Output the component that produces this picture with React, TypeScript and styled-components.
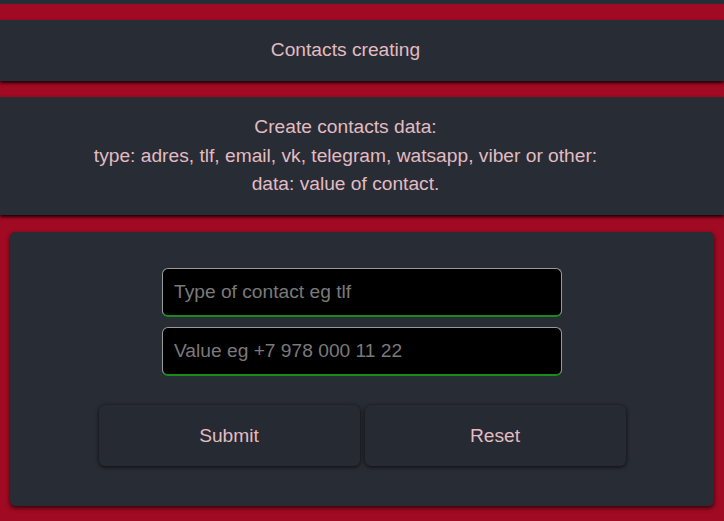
import React from "react";
import styled, { createGlobalStyle } from "styled-components";

const Global = createGlobalStyle`
  html, body { margin: 0; padding: 0; }
  body {
    background: #a00a22;
    font-family: "Liberation Sans", Arial, sans-serif;
    overflow: hidden;
  }
`;

const Page = styled.div`
  display: flex;
  flex-direction: column;
  width: 724px;
  min-height: 521px;
`;

const TopStrip = styled.div`
  height: 4px;
  background: #282c34;
  margin-bottom: 16px;
`;

const Panel = styled.div<{ $mb: number }>`
  background: #282c34;
  color: #e2bcc2;
  font-size: 19.2px;
  line-height: 28.8px;
  text-align: center;
  padding: 16px 33px 16px 0;
  margin-bottom: ${(p) => p.$mb}px;
  box-shadow: 0 2px 3px rgba(0, 0, 0, 0.85);
`;

const Card = styled.form`
  margin: 0 10px;
  background: #282c34;
  border-radius: 5px;
  box-shadow: 0 2px 4px rgba(0, 0, 0, 0.7);
  padding: 36px 0 40px;
  display: flex;
  flex-direction: column;
  align-items: center;
`;

const Input = styled.input`
  box-sizing: border-box;
  width: 400px;
  height: 49px;
  margin-bottom: 10px;
  background: #000;
  border: 1px solid #9a9a9a;
  border-bottom: 2px solid #1a8a1a;
  border-radius: 6px;
  padding: 0 11px;
  font-family: "Liberation Sans", Arial, sans-serif;
  font-size: 19.2px;
  color: #ddd;
  outline: none;
  &::placeholder { color: #7a7a7a; }
`;

const Buttons = styled.div`
  display: flex;
  gap: 5px;
  margin-top: 19px;
`;

const Button = styled.button`
  width: 261px;
  height: 61px;
  background: #262a32;
  border: none;
  border-radius: 6px;
  box-shadow: 0 1px 4px rgba(0, 0, 0, 0.75);
  color: #e2bcc2;
  font-family: "Liberation Sans", Arial, sans-serif;
  font-size: 19.2px;
  cursor: pointer;
`;

export default function App() {
  return (
    <>
      <Global />
      <Page>
        <TopStrip />
        <Panel $mb={16}>Contacts creating</Panel>
        <Panel $mb={17}>
          Create contacts data:
          <br />
          type: adres, tlf, email, vk, telegram, watsapp, viber or other:
          <br />
          data: value of contact.
        </Panel>
        <Card onSubmit={(e) => e.preventDefault()}>
          <Input placeholder="Type of contact eg tlf" />
          <Input placeholder="Value eg +7 978 000 11 22" />
          <Buttons>
            <Button type="submit">Submit</Button>
            <Button type="reset">Reset</Button>
          </Buttons>
        </Card>
      </Page>
    </>
  );
}
